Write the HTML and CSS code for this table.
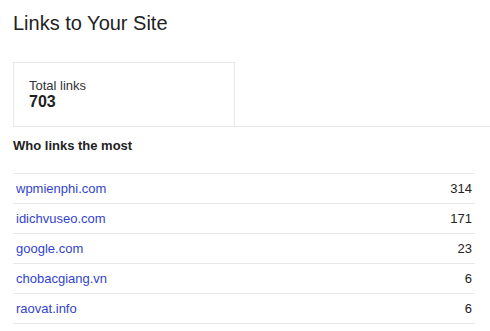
FILE: index.html
```html
<!DOCTYPE html>
<html>
<head>
<meta charset="utf-8">
<link rel="stylesheet" href="styles.css">
</head>
<body>
<div class="page">
  <h1 class="title">Links to Your Site</h1>
  <div class="summary">
    <div class="stat-box">
      <div class="stat-label">Total links</div>
      <div class="stat-value">703</div>
    </div>
  </div>
  <h2 class="section-title">Who links the most</h2>
  <ul class="link-list">
    <li class="link-row"><a class="link-name" href="#">wpmienphi.com</a><span class="link-count">314</span></li>
    <li class="link-row"><a class="link-name" href="#">idichvuseo.com</a><span class="link-count">171</span></li>
    <li class="link-row"><a class="link-name" href="#">google.com</a><span class="link-count">23</span></li>
    <li class="link-row"><a class="link-name" href="#">chobacgiang.vn</a><span class="link-count">6</span></li>
    <li class="link-row"><a class="link-name" href="#">raovat.info</a><span class="link-count">6</span></li>
  </ul>
</div>
</body>
</html>
```

FILE: styles.css
```css
html, body {
  margin: 0;
  padding: 0;
  background: #fff;
}
body {
  font-family: "Liberation Sans", Arial, sans-serif;
  color: #222;
}
.page {
  padding-left: 13px;
}
.title {
  margin: 11px 0 0 0;
  font-size: 20px;
  line-height: 24px;
  font-weight: normal;
  color: #222;
}
.summary {
  margin-top: 27px;
  border-bottom: 1px solid #e8e8e8;
}
.stat-box {
  width: 222px;
  box-sizing: border-box;
  border: 1px solid #e8e8e8;
  border-bottom: none;
  padding: 15px 0 16px 15px;
}
.stat-label {
  font-size: 13px;
  line-height: 16px;
  color: #333;
}
.stat-value {
  font-size: 16px;
  line-height: 16px;
  font-weight: bold;
  color: #222;
}
.section-title {
  margin: 11px 0 0 0;
  font-size: 13px;
  line-height: 16px;
  font-weight: bold;
  color: #222;
}
.link-list {
  list-style: none;
  margin: 19px 0 0 0;
  padding: 0;
  width: 462px;
  border-bottom: 1px solid #e8e8e8;
}
.link-row {
  display: flex;
  justify-content: space-between;
  border-top: 1px solid #e8e8e8;
  padding: 7px 3px 6px 3px;
  font-size: 13px;
  line-height: 16px;
}
.link-name {
  color: #3344cc;
  text-decoration: none;
}
.link-count {
  color: #222;
}
```
